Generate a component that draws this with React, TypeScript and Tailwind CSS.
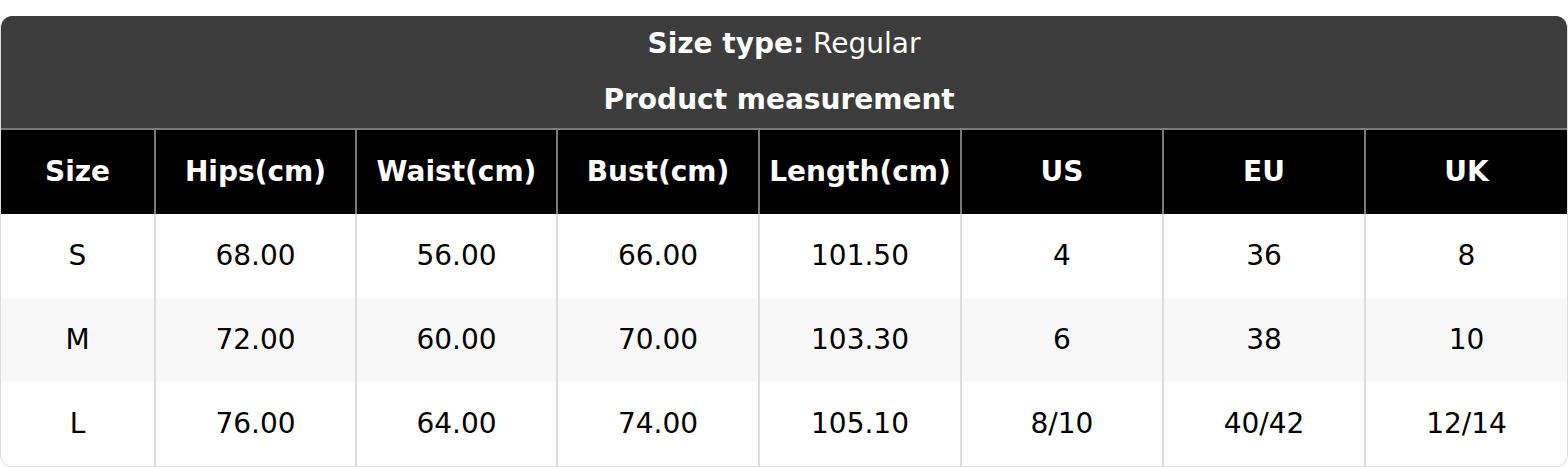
import React from "react";

const columns = ["Size", "Hips(cm)", "Waist(cm)", "Bust(cm)", "Length(cm)", "US", "EU", "UK"];

const rows = [
  ["S", "68.00", "56.00", "66.00", "101.50", "4", "36", "8"],
  ["M", "72.00", "60.00", "70.00", "103.30", "6", "38", "10"],
  ["L", "76.00", "64.00", "74.00", "105.10", "8/10", "40/42", "12/14"],
];

const grid = "grid grid-cols-[153px_201px_201px_202px_202px_202px_202px_203px]";

export default function App() {
  return (
    <div className="w-[1568px] h-[468px] bg-white pt-4 font-['DejaVu_Sans',sans-serif] text-[28px]">
      <div className="rounded-xl border-x border-b border-[#dddddd] overflow-hidden">
        {/* title band */}
        <div className="bg-[#3d3d3d] text-white text-center">
          <div className="h-[56px] flex items-center justify-center">
            <span>
              <span className="font-bold">Size type:</span> Regular
            </span>
          </div>
          <div className="h-[56px] flex items-center justify-center font-bold whitespace-pre">
            {"Product measurement\u00a0"}
          </div>
        </div>

        {/* column header */}
        <div className={`${grid} bg-black text-white font-bold border-t-2 border-[#7a7a7a]`}>
          {columns.map((c, i) => (
            <div
              key={c}
              className={`h-[84px] flex items-center justify-center ${i > 0 ? "border-l-2 border-[#7a7a7a]" : ""}`}
            >
              {c}
            </div>
          ))}
        </div>

        {/* body */}
        {rows.map((r, ri) => (
          <div key={ri} className={`${grid} text-black ${ri === 1 ? "bg-[#f8f8f8]" : "bg-white"}`}>
            {r.map((v, i) => (
              <div
                key={i}
                className={`h-[84px] flex items-center justify-center ${i > 0 ? "border-l-2 border-[#dddddd]" : ""}`}
              >
                {v}
              </div>
            ))}
          </div>
        ))}
      </div>
    </div>
  );
}
